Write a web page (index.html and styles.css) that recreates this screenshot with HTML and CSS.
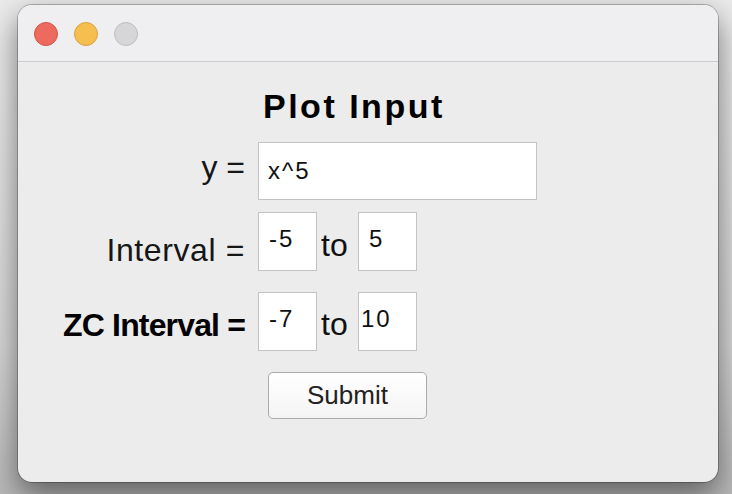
FILE: index.html
```html
<!DOCTYPE html>
<html lang="en">
<head>
<meta charset="utf-8">
<title>Plot Input</title>
<link rel="stylesheet" href="styles.css">
</head>
<body>
<div class="window">
  <div class="titlebar">
    <span class="light light-close"></span>
    <span class="light light-min"></span>
    <span class="light light-zoom"></span>
  </div>
  <div class="content">
    <div class="title">Plot Input</div>
    <div class="row row-y">
      <div class="label label-y">y =</div>
      <input class="entry entry-wide" type="text" value="x^5">
    </div>
    <div class="row row-interval">
      <div class="label label-interval">Interval =</div>
      <input class="entry entry-small" type="text" value="-5">
      <span class="to to-interval">to</span>
      <input class="entry entry-small" type="text" value="5">
    </div>
    <div class="row row-zc">
      <div class="label label-zc">ZC Interval =</div>
      <input class="entry entry-small" type="text" value="-7">
      <span class="to to-zc">to</span>
      <input class="entry entry-small entry-tight" type="text" value="10">
    </div>
    <div class="row row-submit">
      <button class="submit" type="button">Submit</button>
    </div>
  </div>
</div>
</body>
</html>
```

FILE: styles.css
```css
html, body {
  margin: 0;
  padding: 0;
}
body {
  width: 732px;
  height: 494px;
  overflow: hidden;
  background: linear-gradient(#ebebeb, #d6d6d6 70%, #b8b8b8);
  padding: 5px 14px 0 18px;
  box-sizing: border-box;
  font-family: "Liberation Sans", Arial, sans-serif;
}
.window {
  width: 700px;
  height: 477px;
  border-radius: 14px;
  overflow: hidden;
  background: #ececec;
  box-shadow: 0 0 0 1px rgba(0,0,0,0.24), 0 12px 30px rgba(0,0,0,0.5);
  display: flex;
  flex-direction: column;
}
.titlebar {
  height: 57px;
  flex: none;
  box-sizing: border-box;
  background: #efeff1;
  border-bottom: 1px solid #cbcbcd;
  display: flex;
  align-items: flex-start;
  gap: 16px;
  padding: 17px 0 0 16px;
}
.light {
  width: 24px;
  height: 24px;
  border-radius: 50%;
  box-sizing: border-box;
}
.light-close { background: #ed6a5e; border: 1px solid #d4544a; }
.light-min { background: #f6be4f; border: 1px solid #daa33c; }
.light-zoom { background: #d6d6d8; border: 1px solid #bdbdbf; }

.content {
  flex: 1;
  display: flex;
  flex-direction: column;
  padding-top: 27px;
  color: #111;
}
.title {
  font-weight: bold;
  font-size: 34px;
  line-height: 34px;
  letter-spacing: 2.5px;
  padding-left: 245px;
  color: #000;
}
.row {
  display: flex;
  align-items: flex-start;
}
.row-y { margin-top: 19px; }
.row-interval { margin-top: 12px; }
.row-zc { margin-top: 21px; }
.row-submit { margin-top: 21px; padding-left: 250px; }

.label {
  width: 227px;
  margin-right: 13px;
  text-align: right;
  font-size: 32px;
  line-height: 32px;
  white-space: nowrap;
  color: #161616;
}
.label-y { margin-top: 9px; }
.label-interval { margin-top: 22px; letter-spacing: 0.6px; }
.label-zc { margin-top: 17px; font-weight: bold; letter-spacing: -0.85px; color: #000; }

.entry {
  box-sizing: border-box;
  margin: 0;
  border: 1px solid #c3c3c3;
  border-radius: 0;
  background: #fff;
  font-family: "Liberation Sans", Arial, sans-serif;
  font-size: 24px;
  letter-spacing: 2px;
  color: #111;
  padding: 0 0 0 9px;
  outline: none;
}
.entry-wide { width: 279px; height: 58px; }
.entry-small { width: 59px; height: 59px; padding-left: 10px; padding-bottom: 5px; }
.entry-tight { padding-left: 2px; }

.to {
  width: 41px;
  box-sizing: border-box;
  padding-left: 4px;
  font-size: 32px;
  line-height: 32px;
  color: #111;
}
.to-interval { margin-top: 17px; }
.to-zc { margin-top: 16px; }

.submit {
  width: 159px;
  height: 47px;
  margin: 0;
  padding: 0;
  box-sizing: border-box;
  border: 1px solid #ababab;
  border-radius: 5px;
  background: linear-gradient(#ffffff, #f4f4f4);
  font-family: "Liberation Sans", Arial, sans-serif;
  font-size: 26px;
  color: #222;
}
```
